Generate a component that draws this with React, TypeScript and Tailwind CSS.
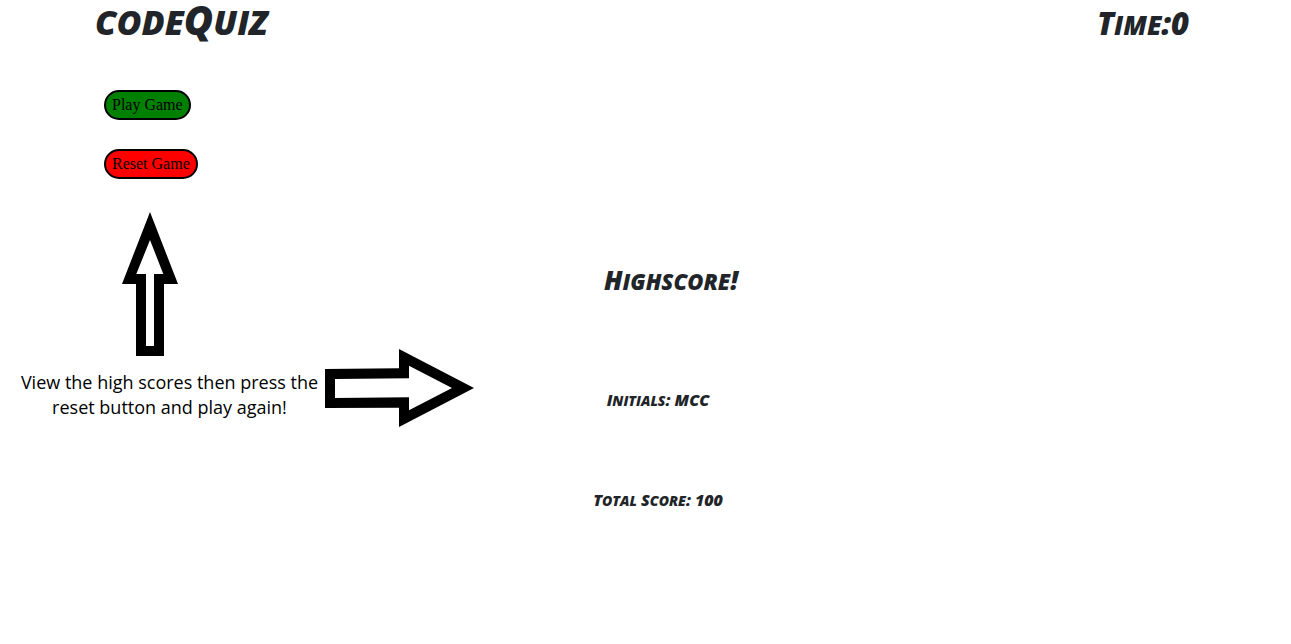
const marker =
  "font-['Permanent_Marker','Open_Sans',sans-serif] font-extrabold italic text-[#212529] whitespace-nowrap";

const pill =
  "rounded-full border-2 border-black px-1.5 h-[30px] font-['Liberation_Serif',serif] text-base leading-6 text-black";

/* Capitals at full height, lowercase letters as slightly smaller capitals. */
function Caps({ text, small }: { text: string; small: string }) {
  return (
    <>
      {text.split(/([a-z]+)/).map((part, i) =>
        /^[a-z]+$/.test(part) ? (
          <span key={i} className={`${small} uppercase`}>
            {part}
          </span>
        ) : (
          part
        ),
      )}
    </>
  );
}

function UpArrow() {
  return (
    <svg width="56" height="144" viewBox="0 0 56 144" aria-hidden="true">
      <path
        fillRule="evenodd"
        d="M28 0 L56 72 H42 V144 H14 V72 H0 Z M28 28 L14.3 62 H24 V134 H32 V62 H41.3 Z"
      />
    </svg>
  );
}

function RightArrow() {
  return (
    <svg width="149" height="78" viewBox="0 0 149 78" aria-hidden="true">
      <path
        fillRule="evenodd"
        d="M0 20 L74 19.3 V0 L149 39 L74 78 V58.7 L0 59 Z M10 30 V49 L84 48.3 V61.3 L127 39 L84 16.7 V29.3 Z"
      />
    </svg>
  );
}

export default function App() {
  return (
    <div className="min-h-screen bg-white">
      <header className="flex h-11 items-baseline justify-between pl-[95px] pr-[102px]">
        <h1 className={`${marker} text-[40px] leading-10`}>
          <Caps text="codeQuiz" small="text-[34px]" />
        </h1>
        <p className={`${marker} text-[31px] leading-10`}>
          <Caps text="Time:0" small="text-[26px]" />
        </p>
      </header>

      <main className="grid grid-cols-[319px_160px_358px_1fr] pt-[46px]">
        <aside>
          <div className="flex flex-col items-start gap-[29px] pl-[104px]">
            <button type="button" className={`${pill} bg-[#008000]`}>
              Play Game
            </button>
            <button type="button" className={`${pill} bg-[#ff0000]`}>
              Reset Game
            </button>
          </div>
          <div className="pl-[122px] pt-[33px]">
            <UpArrow />
          </div>
          <p className="pl-5 pt-3.5 text-center font-['Segoe_UI','Open_Sans',sans-serif] text-lg leading-[25px] whitespace-nowrap text-black">
            View the high scores then press the
            <br />
            reset button and play again!
          </p>
        </aside>

        <div className="pl-1.5 pt-[259px]">
          <RightArrow />
        </div>

        <section className="flex flex-col items-center pt-[174px]">
          <h2 className={`${marker} pl-[26px] text-[26px] leading-8`}>
            <Caps text="Highscore!" small="text-[22px]" />
          </h2>
          <p className={`${marker} pt-[91px] text-base leading-6`}>
            <Caps text="Initials: MCC" small="text-sm" />
          </p>
          <p className={`${marker} pt-[76px] text-base leading-6`}>
            <Caps text="Total Score: 100" small="text-sm" />
          </p>
        </section>
      </main>
    </div>
  );
}
